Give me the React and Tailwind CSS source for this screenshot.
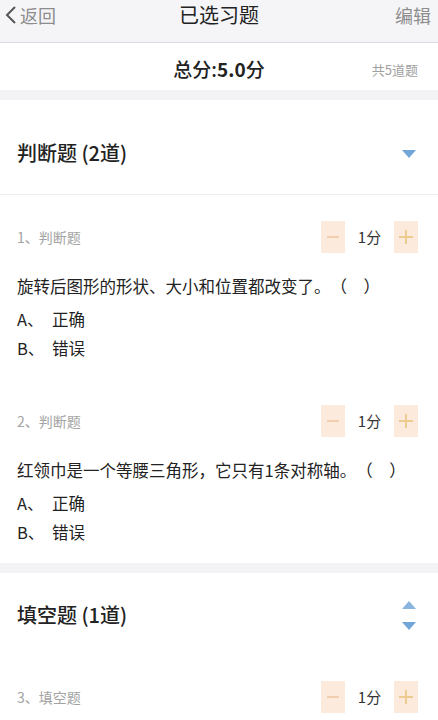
import React from "react";

const font = { fontFamily: '"Noto Sans CJK SC", "Noto Sans", sans-serif' };

function Stepper() {
  return (
    <div className="flex h-[32px] items-stretch">
      <div className="flex w-[24px] items-center justify-center bg-[#fcebdc]">
        <span className="block h-[2px] w-[12px] bg-[#f1cfae]" />
      </div>
      <div className="flex w-[49px] items-center justify-center bg-white text-[15px] text-[#333]">1分</div>
      <div className="relative flex w-[24px] items-center justify-center bg-[#fcebdc]">
        <span className="absolute h-[2px] w-[14px] bg-[#eccb8e]" />
        <span className="absolute h-[14px] w-[2px] bg-[#eccb8e]" />
      </div>
    </div>
  );
}

function Question({ idx, type, text, options, spacer }) {
  return (
    <div className="bg-white px-[17px] pt-[26px] pb-[14px]">
      <div className="flex items-center justify-between pr-[3px]">
        <span className="text-[14px] text-[#a3a3a3]">{idx}、{type}</span>
        <Stepper />
      </div>
      {text && (
        <div className="mt-[18px] whitespace-pre text-[16.5px] leading-[30px] text-[#222] [text-spacing-trim:space-all]">{text}</div>
      )}
      {options && (
        <div className="mt-[4px] flex flex-col text-[16.5px] leading-[29px] text-[#222]">
          {options.map((o) => (
            <div key={o[0]} className="flex">
              <span className="w-[35px]">{o[0]}、</span>
              <span>{o[1]}</span>
            </div>
          ))}
        </div>
      )}
      {spacer ? <div style={{ height: spacer }} /> : null}
    </div>
  );
}

function TriDown() {
  return (
    <svg width="14" height="8" viewBox="0 0 14 8">
      <path d="M0 0 L14 0 L7 8 Z" fill="#72a6d8" />
    </svg>
  );
}
function TriUp() {
  return (
    <svg width="14" height="8" viewBox="0 0 14 8">
      <path d="M0 8 L14 8 L7 0 Z" fill="#8ab5df" />
    </svg>
  );
}

export default function App() {
  const opts = [
    ["A", "正确"],
    ["B", "错误"],
  ];
  return (
    <div style={font} className="h-[720px] w-[438px] overflow-hidden bg-[#f3f3f5]">
      {/* header */}
      <div className="relative flex h-[43px] items-center justify-center border-b border-[#dcdce0] bg-[#f5f5f7]">
        <div className="absolute left-[4px] top-0 flex h-[30px] items-center">
          <svg width="14" height="20" viewBox="0 0 14 20" className="mr-[2px]">
            <path d="M11 2 L3 10 L11 18" fill="none" stroke="#555" strokeWidth="2" />
          </svg>
          <span className="text-[18px] text-[#8d8d8d]">返回</span>
        </div>
        <div className="absolute left-0 right-0 top-0 flex h-[30px] items-center justify-center">
          <span className="text-[20px] text-[#222]">已选习题</span>
        </div>
        <div className="absolute right-[7px] top-0 flex h-[30px] items-center">
          <span className="text-[18px] text-[#8d8d8d]">编辑</span>
        </div>
      </div>
      {/* total */}
      <div className="relative flex h-[47px] items-center justify-center bg-white pt-[6px]">
        <span className="text-[19px] font-medium text-[#222]">
          总分:<span className="font-bold">5.0</span>分
        </span>
        <span className="absolute right-[20px] text-[13px] text-[#a0a0a0]">共5道题</span>
      </div>
      <div className="h-[10px]" />
      {/* section 1 */}
      <div className="flex h-[95px] items-start justify-between border-b border-[#eeeef0] bg-white px-[17px] pt-[38px]">
        <span className="text-[20px] font-medium text-[#222]">判断题 (2道)</span>
        <div className="mr-[5px] mt-[12px]"><TriDown /></div>
      </div>
      <Question
        idx={1}
        type="判断题"
        text={"旋转后图形的形状、大小和位置都改变了。（\u3000）"}
        options={opts}
        spacer={2}
      />
      <Question
        idx={2}
        type="判断题"
        text={"红领巾是一个等腰三角形，它只有1条对称轴。（\u3000）"}
        options={opts}
        spacer={2}
      />
      <div className="h-[10px]" />
      {/* section 2 */}
      <div className="flex h-[82px] items-start justify-between bg-white px-[17px] pt-[27px]">
        <span className="text-[20px] font-medium text-[#222]">填空题 (1道)</span>
        <div className="mr-[5px] mt-[1px] flex flex-col gap-[13px]">
          <TriUp />
          <TriDown />
        </div>
      </div>
      <Question idx={3} type="填空题" />
    </div>
  );
}
